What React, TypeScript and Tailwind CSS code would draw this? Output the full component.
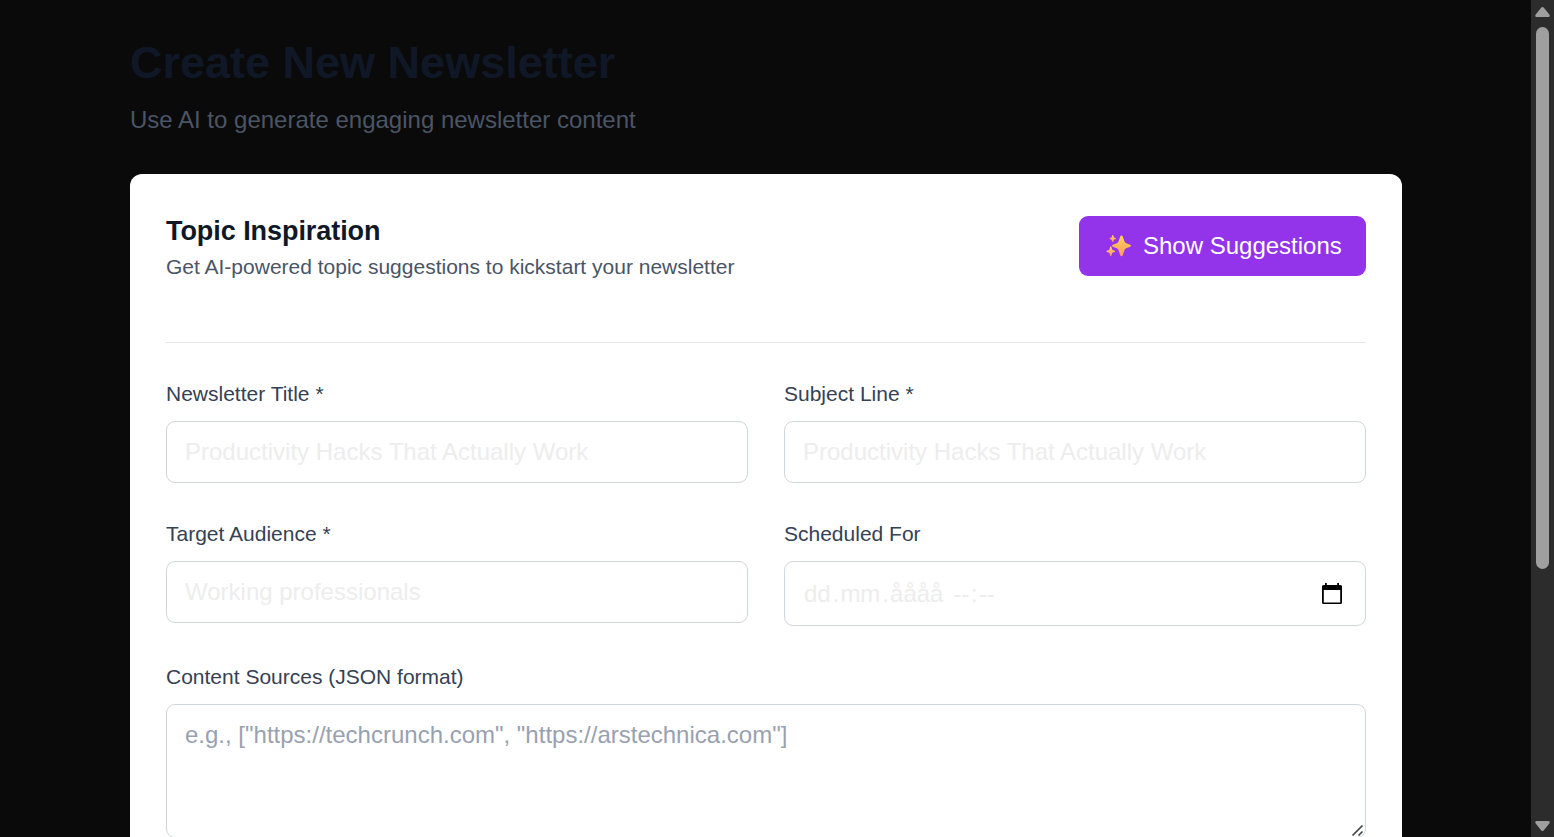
import React from "react";

const fieldClass =
  "block h-[62px] w-full rounded-[9px] border border-[#d1d5dc] bg-white px-[18px] py-3 text-[24px] leading-[36px] text-[#ededed] outline-none placeholder:text-[#ededed]";

function Field({ label, children }: { label: string; children: React.ReactNode }) {
  return (
    <div>
      <label className="mb-3 block text-[21px] leading-[30px] text-[#364153]">{label}</label>
      {children}
    </div>
  );
}

function Sparkles() {
  return (
    <svg width="26" height="24" viewBox="0 0 26 24" className="ml-[3px] mr-[11px] shrink-0" aria-hidden="true">
      <defs>
        <linearGradient id="spark" x1="0.5" y1="0" x2="0.5" y2="1">
          <stop offset="0" stopColor="#ffd45a" />
          <stop offset="1" stopColor="#ff9b5c" />
        </linearGradient>
      </defs>
      <g fill="url(#spark)">
        <path d="M14.3 2.2Q15.5 .6 16.7 2.2L18.5 7.6Q19 8.8 20.2 9.3L24.2 10.8Q25.8 11.8 24.2 12.8L20.2 14.3Q19 14.8 18.5 16L16.7 21.4Q15.5 23 14.3 21.4L12.5 16Q12 14.8 10.8 14.3L6.8 12.8Q5.2 11.8 6.8 10.8L10.8 9.3Q12 8.8 12.5 7.6Z" />
        <path d="M6.3 1.3Q6.8.5 7.3 1.3L8 3.4L9.7 4.1Q10.4 4.6 9.7 5.1L8 5.7L7.3 7.7Q6.8 8.5 6.3 7.7L5.6 5.7L3.9 5.1Q3.2 4.6 3.9 4.1L5.6 3.4Z" />
        <path d="M4.2 12.8Q4.8 11.8 5.4 12.8L6.3 15.7L8.8 16.7Q9.7 17.3 8.8 17.9L6.3 18.8L5.4 21.6Q4.8 22.6 4.2 21.6L3.3 18.8L.8 17.9Q0 17.3.8 16.7L3.3 15.7Z" />
      </g>
    </svg>
  );
}

function Scrollbar() {
  return (
    <div className="flex h-full w-[23px] shrink-0 flex-col items-center bg-[#2c2c2c]">
      <svg width="23" height="27" viewBox="0 0 23 27" className="shrink-0">
        <path d="M10.3 7.6Q11.5 6.2 12.7 7.6L18.3 14.5Q19.6 17 17.3 17H5.7Q3.4 17 4.7 14.5Z" fill="#9f9f9f" />
      </svg>
      <div className="h-[542px] w-[13px] rounded-full bg-[#9f9f9f]" />
      <svg width="23" height="27" viewBox="0 0 23 27" className="mt-auto shrink-0">
        <path d="M10.3 20.4Q11.5 21.8 12.7 20.4L18.3 13.5Q19.6 11 17.3 11H5.7Q3.4 11 4.7 13.5Z" fill="#9f9f9f" />
      </svg>
    </div>
  );
}

export default function App() {
  return (
    <div className="flex h-[837px] w-[1554px] overflow-hidden bg-[#0a0a0a] font-['Liberation_Sans',Arial,sans-serif]">
      <main className="h-full min-w-0 flex-1 overflow-hidden pl-[130px] pt-9">
        <div className="w-[1272px]">
          <h1 className="mb-3 text-[45px] font-bold leading-[54px] text-[#101828]">Create New Newsletter</h1>
          <p className="mb-9 text-[24px] leading-[36px] text-[#4a5565]">
            Use AI to generate engaging newsletter content
          </p>
          <div className="rounded-[12px] bg-white p-9">
            <div className="mb-9 flex items-center justify-between border-b border-[#e5e7eb] pb-[60px]">
              <div>
                <h2 className="text-[27px] font-bold leading-[42px] tracking-[-0.06px] text-[#101828]">
                  Topic Inspiration
                </h2>
                <p className="text-[21px] leading-[30px] text-[#4a5565]">
                  Get AI-powered topic suggestions to kickstart your newsletter
                </p>
              </div>
              <button className="flex h-[60px] w-[287px] items-center rounded-[9px] bg-[#9333ea] pl-6 text-[24px] leading-[36px] text-white">
                <Sparkles />
                <span className="whitespace-nowrap">Show Suggestions</span>
              </button>
            </div>
            <div className="mb-9 grid grid-cols-2 gap-9">
              <Field label="Newsletter Title *">
                <input className={fieldClass} placeholder="Productivity Hacks That Actually Work" />
              </Field>
              <Field label="Subject Line *">
                <input className={fieldClass} placeholder="Productivity Hacks That Actually Work" />
              </Field>
              <Field label="Target Audience *">
                <input className={fieldClass} placeholder="Working professionals" />
              </Field>
              <Field label="Scheduled For">
                <div className="flex h-[65px] items-center justify-between rounded-[9px] border border-[#d1d5dc] pl-[19px] pr-[22px] text-[24px] leading-[36px] text-[#ededed]">
                  <div className="flex whitespace-pre">
                    <span>dd</span>
                    <span className="ml-[2px]">.</span>
                    <span className="ml-[1px]">mm</span>
                    <span className="ml-[2px]">.</span>
                    <span className="ml-[1px]">åååå</span>
                    <span className="ml-[10px]">--</span>
                    <span className="mx-[1.5px]">:</span>
                    <span>--</span>
                  </div>
                  <svg width="22" height="22" viewBox="0 0 22 22" className="shrink-0">
                    <path
                      fill="#000"
                      fillRule="evenodd"
                      d="M4 0H5.8V2H16.2V0H18V2H19.5Q21 2 21 3.5V19.5Q21 21 19.5 21H2.5Q1 21 1 19.5V3.5Q1 2 2.5 2H4ZM2.8 7V19.4H19.2V7Z"
                    />
                  </svg>
                </div>
              </Field>
            </div>
            <Field label="Content Sources (JSON format)">
              <div className="relative">
                <textarea
                  rows={3}
                  className="block h-[134px] w-full resize-none rounded-[9px] border border-[#d1d5dc] px-[18px] py-3 text-[24px] leading-[36px] outline-none placeholder:text-[#99a1af]"
                  placeholder={'e.g., ["https://techcrunch.com", "https://arstechnica.com"]'}
                />
                <svg width="14" height="13" viewBox="0 0 14 13" className="absolute bottom-[1px] right-[1px]">
                  <path d="M1.5 11.5L11.5 1.5M7.5 11.5L11.5 7.5" stroke="#444" strokeWidth="1.7" fill="none" />
                </svg>
              </div>
            </Field>
          </div>
        </div>
      </main>
      <Scrollbar />
    </div>
  );
}
